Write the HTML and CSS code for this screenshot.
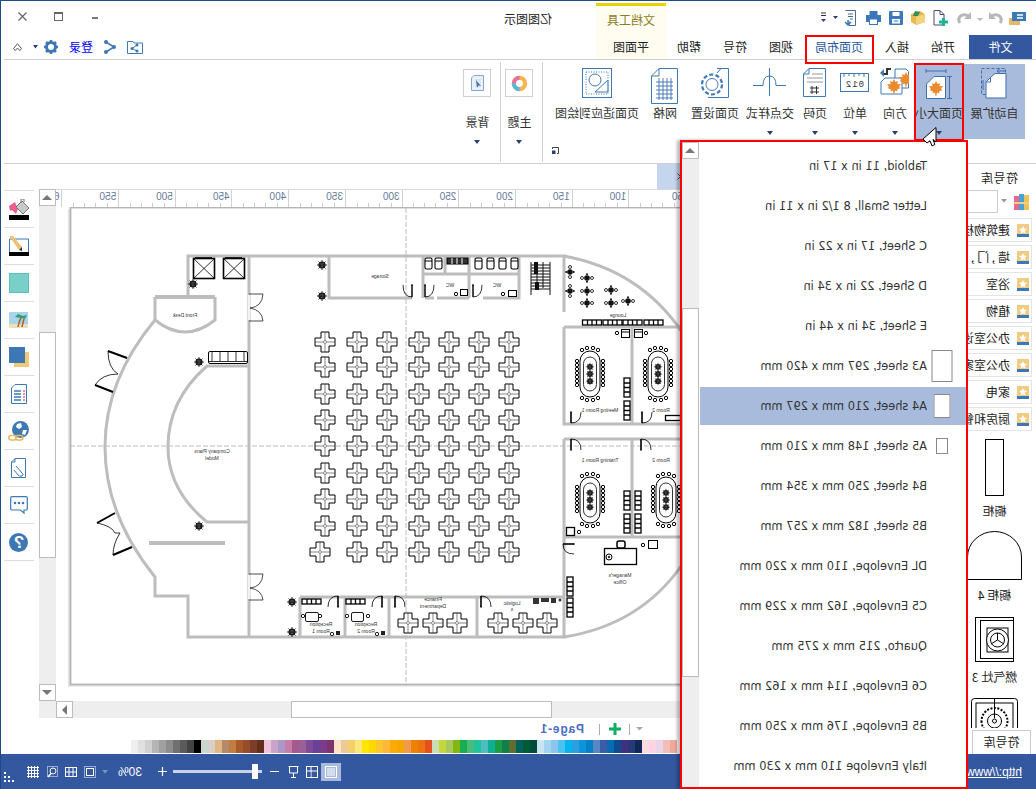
FILE: index.html
```html
<!DOCTYPE html>
<html lang="zh">
<head>
<meta charset="utf-8">
<title>亿图图示</title>
<link rel="stylesheet" href="styles.css">
</head>
<body>
<svg class="defs" width="0" height="0">
  <defs>
    <g id="cat"><rect width="12" height="12" fill="#f2cb82"/><rect y="10" width="12" height="3" fill="#3c78b8"/><path d="M6 2l1.2 2.6 2.8.3-2.100 1.900.6 2.800L6 8.200 3.500 9.600l.6-2.800L2 4.900l2.800-.3z" fill="#fff"/></g>
    <g id="c"><path d="M-4-10H4V-4H10V4H4V10H-4V4H-10V-4H-4Z" fill="#fff" stroke="#000" stroke-width="1"/><path d="M-10 0H-2M2 0H10M0-10V-2M0 2V10" stroke="#333" stroke-width=".6"/><circle r="1.500" fill="#fff" stroke="#555" stroke-width=".7"/></g>
    <g id="r"><use href="#c" x="325"/><use href="#c" x="357"/><use href="#c" x="387"/><use href="#c" x="419"/><use href="#c" x="449"/><use href="#c" x="479"/><use href="#c" x="509"/></g>
    <g id="p"><circle r="3.600" fill="#1a1a1a"/><path d="M-5 0H5M0-5V5M-3.500-3.500L3.500 3.500M-3.500 3.500L3.500-3.500" stroke="#222" stroke-width=".9"/><path d="M-1.500-1L1.500-1M-1 1.500L1 1" stroke="#888" stroke-width=".6"/></g>
    <g id="t"><rect x="-10" y="-23" width="20" height="46" rx="10" fill="#fff" stroke="#000"/><rect x="-6.500" y="-17" width="13" height="34" rx="6.500" fill="#fff" stroke="#000" stroke-width=".8"/><use href="#p" y="-9" transform="scale(.8)"/><use href="#p" y="0" transform="scale(.8)"/><use href="#p" y="9" transform="scale(.8)"/><g fill="#fff" stroke="#000" stroke-width="1"><circle cx="-13" cy="-13" r="1.700"/><circle cx="-13" cy="-9" r="1.700"/><circle cx="-13" cy="-5" r="1.700"/><circle cx="-13" cy="-1" r="1.700"/><circle cx="-13" cy="3" r="1.700"/><circle cx="-13" cy="7" r="1.700"/><circle cx="-13" cy="11" r="1.700"/><circle cx="13" cy="-13" r="1.700"/><circle cx="13" cy="-9" r="1.700"/><circle cx="13" cy="-5" r="1.700"/><circle cx="13" cy="-1" r="1.700"/><circle cx="13" cy="3" r="1.700"/><circle cx="13" cy="7" r="1.700"/><circle cx="13" cy="11" r="1.700"/><circle cx="-8" cy="-24" r="1.700"/><circle cx="-3" cy="-26" r="1.700"/><circle cx="3" cy="-26" r="1.700"/><circle cx="8" cy="-24" r="1.700"/><circle cx="-8" cy="24" r="1.700"/><circle cx="-3" cy="26" r="1.700"/><circle cx="3" cy="26" r="1.700"/><circle cx="8" cy="24" r="1.700"/></g></g>
    <g id="s"><rect width="19" height="5" fill="#fff" stroke="#000" stroke-width="1.300"/><path d="M5 0V5M9.500 0V5M14 0V5" stroke="#000" stroke-width="1.300"/></g>
    <g id="sv"><rect width="6" height="19" fill="#fff" stroke="#000" stroke-width="1.300"/><path d="M0 5H6M0 9.500H6M0 14H6" stroke="#000" stroke-width="1.300"/></g>
    <g id="d"><path d="M0 0V11" stroke="#000" stroke-width="1.600" fill="none"/><path d="M0 0Q10 0 10 11" stroke="#000" stroke-width=".8" fill="none"/><circle cx="0" cy="11" r=".8" fill="#000"/></g>
    <g id="l"><circle r="2.800" fill="#111"/><circle cx="-5" r="1.500" fill="#fff" stroke="#000" stroke-width=".8"/><circle cx="5" r="1.500" fill="#fff" stroke="#000" stroke-width=".8"/><circle cy="-3.800" r="1" fill="#111"/><circle cy="3.800" r="1" fill="#111"/></g>
    <g id="w"><rect width="7" height="11" rx="1.500" fill="#fff" stroke="#000" stroke-width="1.100"/><path d="M0 3H7" stroke="#000"/></g>
    <g id="leaf"><path d="M7 0l1.500 3 2.500-1-.7 3.200L14 5l-2 3 1.500 1-3.500 1.500.5 2L8 11.500 7.300 15h-.8L6 11.500 3.500 12.500l.5-2L.5 9 2 8 0 5l3.700.2L3 2l2.500 1z" fill="#ec8a2e"/></g>
  </defs>
</svg>

<div class="app">
  <header class="titlebar">
    <div class="qat">
      <svg class="im" width="17" height="13" viewBox="0 0 17 13"><rect x="0" y="6" width="11" height="7" fill="#e3b96e"/><rect x="3" y="0" width="14" height="9" fill="#3c78b8"/><path d="M8 3h6M8 6h6" stroke="#fff" stroke-width="1.500"/></svg>
      <svg class="im" width="14" height="13" viewBox="0 0 14 13"><path d="M2 4.500Q7 1 11 4.500Q13.500 7.500 11 11" fill="none" stroke="#b8b8b8" stroke-width="3"/><path d="M0 0V7H7Z" fill="#b8b8b8"/></svg>
      <svg width="6" height="13" viewBox="0 0 6 13"><path d="M0 6H6L3 9Z" fill="#b8b8b8"/></svg>
      <svg class="im" width="14" height="13" viewBox="0 0 14 13"><path d="M12 4.500Q7 1 3 4.500Q.5 7.500 3 11" fill="none" stroke="#b8b8b8" stroke-width="3"/><path d="M14 0V7H7Z" fill="#b8b8b8"/></svg>
      <svg class="im m3" width="15" height="17" viewBox="0 0 15 17"><path d="M1 .5H7L11 4.500V15H1Z" fill="#fff" stroke="#4a4a6a"/><path d="M7 .5V4.500H11" fill="none" stroke="#4a4a6a"/><path d="M6 12H15M10.500 8V16" stroke="#1eb394" stroke-width="3"/></svg>
      <svg class="im m2" width="14" height="14" viewBox="0 0 14 14"><path d="M0 3L9 0L14 3V11L5 14L0 11Z" fill="#e9b94f"/><path d="M4 0L9 1L7 5L2 5Z" fill="#2f8f56"/><path d="M5 6L14 3V11L5 14Z" fill="#f3d27c"/></svg>
      <svg class="m2" width="14" height="14" viewBox="0 0 14 14"><rect width="14" height="14" rx="1" fill="#3c78b8"/><rect x="3.500" y="1" width="7" height="4" fill="#fff"/><rect x="3" y="8" width="8" height="4.500" fill="#fff"/><rect x="4.500" y="9.500" width="5" height="1" fill="#3c78b8"/></svg>
      <svg class="m2" width="15" height="14" viewBox="0 0 15 14"><rect x="3.500" y="0" width="8" height="4" fill="#3c78b8"/><rect x="0" y="4" width="15" height="7" fill="#3c78b8"/><rect x="3.500" y="8" width="8" height="5.500" fill="#fff" stroke="#3c78b8"/></svg>
      <svg class="im m4" width="11" height="16" viewBox="0 0 11 16"><path d="M.5.5H10.500V15.500H4V11" fill="#fff" stroke="#4a6a94"/><path d="M3 4H8M3 6.500H8M5 9H8" stroke="#4a6a94"/><path d="M3 10V14M0 12L3 15L6 12" fill="none" stroke="#3c78b8" stroke-width="1.500"/></svg>
      <svg class="m1" width="5" height="14" viewBox="0 0 5 14"><path d="M0 5H5L2.500 8Z" fill="#2b3f72"/></svg>
      <svg class="m1" width="5" height="14" viewBox="0 0 5 14"><path d="M0 2H5M0 4.500H5" stroke="#333"/><path d="M0 8H5L2.500 11Z" fill="#2b3f72"/></svg>
    </div>
    <div class="ctx-head">文档工具</div>
    <div class="doc-title">亿图图示</div>
    <div class="winctl">
      <span class="win-min"></span>
      <span class="win-max"></span>
      <svg width="9" height="9" viewBox="0 0 9 9"><path d="M.5.5L8.500 8.500M8.500.5L.5 8.500" stroke="#666" stroke-width="1.200"/></svg>
    </div>
  </header>

  <nav class="tabs">
    <div class="tab tab-file">文件</div>
    <div class="tab w46">开始</div>
    <div class="tab w46">插入</div>
    <div class="tab tab-active">页面布局<span class="mark"></span></div>
    <div class="tab w46">视图</div>
    <div class="tab w46">符号</div>
    <div class="tab w46">帮助</div>
    <div class="tab tab-ctx">平面图</div>
    <div class="tab-tools">
      <svg class="im" width="16" height="14" viewBox="0 0 16 14"><path d="M.5 1.500H6L7 3H15.500V13.500H.5Z" fill="#fff" stroke="#3e78b4"/><path d="M5 8.500L10 5M5 8.500L10 11" stroke="#3e78b4"/><circle cx="5" cy="8.500" r="1.500" fill="#3e78b4"/><circle cx="10" cy="5" r="1.500" fill="#3e78b4"/><circle cx="10" cy="11" r="1.500" fill="#3e78b4"/></svg>
      <svg class="im" width="12" height="14" viewBox="0 0 12 14"><path d="M2 2L10 7L2 12" fill="none" stroke="#3e78b4" stroke-width="1.500"/><circle cx="2" cy="2" r="2" fill="#3e78b4"/><circle cx="10" cy="7" r="2" fill="#3e78b4"/><circle cx="2" cy="12" r="2" fill="#3e78b4"/></svg>
      <span class="login">登录</span>
      <svg width="14" height="14" viewBox="0 0 14 14"><circle cx="7" cy="7" r="4.500" fill="none" stroke="#3e78b4" stroke-width="3"/><path d="M7 0V2.500M7 11.500V14M0 7H2.500M11.500 7H14M2 2L4 4M10 10L12 12M12 2L10 4M4 10L2 12" stroke="#3e78b4" stroke-width="2.500"/></svg>
      <svg class="mn5" width="5" height="4" viewBox="0 0 5 4"><path d="M0 0H5L2.500 3.500Z" fill="#2b3f72"/></svg>
      <svg width="9" height="8" viewBox="0 0 9 8"><path d="M.5 5.500L4.500.8L8.500 5.500L6.800 7.500L4.500 5L2.200 7.500Z" fill="none" stroke="#555"/></svg>
    </div>
  </nav>

  <section class="ribbon">
    <div class="rgroup rg-main">
      <div class="rrow">
        <div class="rbtn w61 on">
          <div class="ric"><svg class="im" width="26" height="31" viewBox="0 0 26 31"><rect x=".5" y=".5" width="24" height="26" fill="none" stroke="#3e6fae" stroke-dasharray="3 2"/><path d="M9.500 9.500L14 5.500H25V30H5V14Z" fill="#fff" stroke="#3e6fae"/><path d="M9.500 9.500V14H5" fill="none" stroke="#3e6fae"/><path d="M16 3H24M19 .5L16 3L19 5.500" fill="none" stroke="#3e6fae"/><path d="M2 12V22" stroke="#3e6fae"/></svg></div>
          <span class="rlabel">自动扩展</span>
        </div>
        <div class="rbtn w48 on">
          <span class="mark mark-size"></span>
          <div class="ric"><svg class="im" width="28" height="31" viewBox="0 0 28 31"><path d="M1 1V5M21 1V5M1 3H21" fill="none" stroke="#3e6fae"/><path d="M9 8.500H20.500V30.500H1.500V16Z" fill="#fff" stroke="#3e6fae"/><use href="#leaf" x="4" y="13"/><path d="M22 8.500H27M22 30.500H27M24.500 8.500V30.500" fill="none" stroke="#3e6fae"/></svg></div>
          <span class="rlabel">页面大小</span>
          <i class="caret"></i>
        </div>
        <div class="rbtn w40">
          <div class="ric"><svg class="im" width="29" height="27" viewBox="0 0 29 27"><path d="M15 1H26L28.500 3.500V20H15Z" fill="#fff" stroke="#3e78b4"/><path d="M5 10H22V26H1V14Z" fill="#fff" stroke="#3e78b4"/><use href="#leaf" x="7" y="11"/><use href="#leaf" x="19" y="4" /><path d="M2 6H7V1L11 1" fill="none" stroke="#333" stroke-width="2"/><path d="M0 5L4 1V9Z" fill="#3e78b4"/></svg></div>
          <span class="rlabel">方向</span>
          <i class="caret"></i>
        </div>
        <div class="rbtn w40">
          <div class="ric"><svg class="ric-low" width="29" height="20" viewBox="0 0 29 20"><rect x=".5" y=".5" width="28" height="18" fill="#fff" stroke="#3e78b4"/><path d="M5 .5V4M10 .5V3M15 .5V4M20 .5V3M25 .5V4" stroke="#3e78b4"/><text class="ric-num" x="14.500" y="14">012</text></svg></div>
          <span class="rlabel">单位</span>
          <i class="caret"></i>
        </div>
        <div class="rbtn w40">
          <div class="ric"><svg class="im" width="23" height="29" viewBox="0 0 23 29"><path d="M6 .5H22.500V28.500H.5V6Z" fill="#fff" stroke="#3e78b4"/><path d="M6 .5V6H.5" fill="none" stroke="#3e78b4"/><path d="M9 6H20M4 10H20M4 14H20" stroke="#bbb" stroke-width="1.500"/><path d="M9 18V26M13.500 18V26M7 20H16M7 24H16" stroke="#333"/></svg></div>
          <span class="rlabel">页码</span>
          <i class="caret"></i>
        </div>
        <div class="rbtn w50">
          <div class="ric"><svg width="33" height="28" viewBox="0 0 33 28"><path d="M0 17.500H10Q10 8 16.500 8Q23 8 23 17.500H33M16.500 0V28" fill="none" stroke="#3e78b4"/></svg></div>
          <span class="rlabel">交点样式</span>
          <i class="caret"></i>
        </div>
        <div class="rbtn w60">
          <div class="ric"><svg class="im" width="29" height="30" viewBox="0 0 29 30"><path d="M17 .5H28.500V29.500H8" fill="#fff" stroke="#3e78b4"/><path d="M21 .5L17 5" stroke="#3e78b4"/><circle cx="12" cy="16.500" r="6" fill="#fff" stroke="#3e78b4"/><circle cx="12" cy="16.500" r="10" fill="none" stroke="#3e78b4" stroke-width="2.200" stroke-dasharray="4 2.300"/></svg></div>
          <span class="rlabel">页面设置</span>
        </div>
        <div class="rbtn w40">
          <div class="ric"><svg class="im" width="27" height="36" viewBox="0 0 27 36"><path d="M8 .5H26.500V35.500H.5V8Z" fill="#fff" stroke="#3e78b4"/><path d="M8 .5V8H.5" fill="none" stroke="#3e78b4"/><path d="M5 14H22M5 18H22M5 22H22M5 26H22M5 30H22M8 10V32M12 10V32M16 10V32M20 10V32" stroke="#3e6fae" stroke-width=".9"/></svg></div>
          <span class="rlabel">网格</span>
        </div>
        <div class="rbtn w96">
          <div class="ric"><svg class="im" width="30" height="30" viewBox="0 0 30 30"><rect x=".5" y=".5" width="29" height="29" fill="#fff" stroke="#3e78b4"/><rect x="4" y="4" width="22" height="22" fill="none" stroke="#3e78b4" stroke-dasharray="1 1.500"/><circle cx="13" cy="12" r="6" fill="none" stroke="#3e78b4"/><path d="M13 24L26 24V12Z" fill="none" stroke="#3e78b4"/></svg></div>
          <span class="rlabel">页面适应到绘图</span>
        </div>
      </div>
      <div class="rfoot"><svg width="7" height="7" viewBox="0 0 7 7"><path d="M.5 2V.5H6.500V6.500H5" fill="none" stroke="#444"/><path d="M0 7V3.500H3.500V7Z M1 6L4 2" fill="#2b3f72"/></svg></div>
    </div>
    <div class="rgroup rg-side">
      <div class="ric-box"><svg width="17" height="17" viewBox="0 0 22 22"><circle cx="11" cy="11" r="10" fill="#f6b44d"/><path d="M11 1A10 10 0 0 1 21 11H11Z" fill="#e86e9c"/><path d="M11 11H21A10 10 0 0 1 11 21Z" fill="#55b7dc"/><circle cx="11" cy="11" r="4.500" fill="#fff"/></svg></div>
      <span class="rlabel rlabel-side">主题</span>
      <i class="caret"></i>
    </div>
    <div class="rgroup rg-side">
      <div class="ric-box"><svg class="im" width="13" height="16" viewBox="0 0 13 16"><path d="M3 .5H12.500V15.500H.5V3Z" fill="#e9f0f8" stroke="#84a6cf"/><path d="M4 5H10M4 8H10M4 11H10" stroke="#c9d8ea"/><path d="M5 5L10 11L7.500 10.500L6 13Z" fill="#4a74ab"/></svg></div>
      <span class="rlabel rlabel-side">背景</span>
      <i class="caret"></i>
    </div>
  </section>

  <main class="body">
    <aside class="library">
      <div class="lib-title">符号库</div>
      <div class="lib-search">
        <svg class="im" width="15" height="16" viewBox="0 0 15 16"><rect x="0" y="2" width="5" height="14" fill="#e8688f"/><rect x="5" y="0" width="5" height="16" fill="#4aa3d8"/><rect x="10" y="1" width="5" height="15" fill="#f0c35a"/><rect x="0" y="8" width="15" height="2" fill="#f2d07c"/></svg>
        <svg width="6" height="4" viewBox="0 0 6 4"><path d="M0 0H6L3 3.500Z" fill="#999"/></svg>
        <span class="lib-input"></span>
      </div>
      <ul class="cats">
        <li><svg width="12" height="13" viewBox="0 0 12 13"><use href="#cat"/></svg>建筑物核心</li>
        <li><svg width="12" height="13" viewBox="0 0 12 13"><use href="#cat"/></svg>墙 , 门 , 窗</li>
        <li><svg width="12" height="13" viewBox="0 0 12 13"><use href="#cat"/></svg>浴室</li>
        <li><svg width="12" height="13" viewBox="0 0 12 13"><use href="#cat"/></svg>植物</li>
        <li><svg width="12" height="13" viewBox="0 0 12 13"><use href="#cat"/></svg>办公室设备</li>
        <li><svg width="12" height="13" viewBox="0 0 12 13"><use href="#cat"/></svg>办公室家具</li>
        <li><svg width="12" height="13" viewBox="0 0 12 13"><use href="#cat"/></svg>家电</li>
        <li><svg width="12" height="13" viewBox="0 0 12 13"><use href="#cat"/></svg>厨房和餐厅</li>
      </ul>
      <div class="shapes">
        <svg class="sh1" width="19" height="57" viewBox="0 0 19 57"><rect x=".5" y=".5" width="18" height="56" fill="#fff" stroke="#000"/></svg>
        <span class="sh-label">橱柜</span>
        <svg class="sh2" width="55" height="49" viewBox="0 0 55 49"><path d="M.5 48.500V26A27 25.500 0 0 1 54.500 26V48.500Z" fill="#fff" stroke="#000"/></svg>
        <span class="sh-label">橱柜 4</span>
        <svg class="sh3" width="39" height="45" viewBox="0 0 39 45"><rect x=".5" y=".5" width="38" height="44" fill="#fff" stroke="#000"/><rect x=".5" y="3.500" width="33" height="38" fill="#fff" stroke="#000"/><rect x="6" y="11" width="21" height="24" fill="#fff" stroke="#000"/><circle cx="16.500" cy="23" r="11" fill="#fff" stroke="#000"/><circle cx="16.500" cy="23" r="7" fill="#fff" stroke="#000"/><path d="M16.500 23V16M16.500 23L10 27M16.500 23L23 27" stroke="#000"/></svg>
        <span class="sh-label">燃气灶 3</span>
        <svg class="sh4" width="47" height="30" viewBox="0 0 47 30"><rect x=".5" y=".5" width="46" height="40" rx="3" fill="#fff" stroke="#000"/><rect x="5" y="5" width="37" height="30" fill="#fff" stroke="#000"/><path d="M23.500 0V20" stroke="#000"/><circle cx="23.500" cy="23" r="13" fill="none" stroke="#000" stroke-dasharray="2 1.500" stroke-width="2"/><circle cx="23.500" cy="23" r="7" fill="none" stroke="#000"/><circle cx="23.500" cy="23" r="2" fill="none" stroke="#000"/></svg>
      </div>
      <div class="lib-tab">符号库</div>
    </aside>

    <section class="workarea">
      <div class="pane-head"><span class="pane-collapse"><svg width="4" height="7" viewBox="0 0 4 7"><path d="M3.500.5L.5 3.500L3.500 6.500" fill="none" stroke="#444"/></svg></span></div>
      <div class="editor">
        <div class="canvas-col">
          <div class="ruler">
            <span>50</span><span>100</span><span>150</span><span>200</span><span>250</span><span>300</span><span>350</span><span>400</span><span>450</span><span>500</span><span>550</span><span>600</span>
          </div>
          <svg class="plan" width="911" height="494" viewBox="69 207 911 494">
            <g transform="matrix(-1 0 0 1 1036 0)">
              <rect x="68" y="209" width="3" height="478" fill="#e4e4e4"/>
              <rect x="70" y="685" width="800" height="2" fill="#ececec"/>
              <rect x="70.500" y="207.500" width="800" height="477" fill="#fff" stroke="#b5b5b5" stroke-width="1.800"/>
              <path d="M406 208V685M70 446H680" stroke="#aaa" stroke-width=".8" stroke-dasharray="5 2" fill="none"/>
              <g fill="none" stroke="#bdbdbd" stroke-width="3">
                <path d="M188 297V256H564V312"/>
                <path d="M249 256V637"/>
                <path d="M155 297H215" stroke-width="4"/>
                <path d="M155 297V320Q185 344 215 320V297" stroke-width="3"/>
                <path d="M155 320Q105 380 105 447Q105 515 155 577V596H188V637H564V439"/>
                <path d="M249 366H207Q168 400 168 447Q168 490 207 522H249"/>
                <path d="M149 543H225" stroke-width="4"/>
                <path d="M329 256V298H412M425 298H434M437 298H469M483 298H519V256M423 256V298M469 256V298"/>
                <path d="M423 274H445V256M469 274H519M445 274H469"/>
                <path d="M564 256Q640 270 682 332"/>
                <path d="M564 327H682M564 327V424H682M632 327V424"/>
                <path d="M564 439H682M632 439V537M564 537H682"/>
                <path d="M564 637Q640 625 682 565"/>
                <path d="M300 597H564M300 597V637M345 597V637M389 597V637M477 597V637"/>
              </g>
              <g>
                <rect x="193.500" y="258.500" width="21" height="20" fill="#fff" stroke="#000" stroke-width="1.600"/><path d="M193.500 258.500L214.500 278.500M214.500 258.500L193.500 278.500M195 257.500H212" stroke="#000" stroke-width=".8"/>
                <rect x="223.500" y="258.500" width="21" height="20" fill="#fff" stroke="#000" stroke-width="1.600"/><path d="M223.500 258.500L244.500 278.500M244.500 258.500L223.500 278.500M225 257.500H242" stroke="#000" stroke-width=".8"/>
                <use href="#p" x="193" y="284"/><use href="#p" x="322" y="265"/><use href="#p" x="322" y="296"/><use href="#p" x="199" y="362"/><use href="#p" x="199" y="526"/><use href="#p" x="292" y="602"/><use href="#p" x="292" y="632"/>
                <rect x="208.500" y="351.500" width="39" height="12" rx="1.500" fill="#fff" stroke="#000"/><path d="M212 352V361M220 352V361M228 352V361M236 352V361M244 352V361M209 361.500H247" stroke="#000" stroke-width=".8"/>
              </g>
              <g fill="none" stroke="#000" stroke-width=".8">
                <path d="M249 294H263Q262 307 250 308Q262 310 263 321H249" stroke="#222"/>
                <path d="M249 574H263Q262 587 250 588Q262 590 263 600H249" stroke="#222"/>
                <path d="M108 351Q108 368 118 374Q102 374 95 385M97 523Q112 526 115 533L120 533Q113 544 113 555"/>
                <path d="M108 351L127 358M95 385L113 392M97 523L115 513M113 555L132 547" stroke-width="2"/>
              </g>
              <path d="M249 295V320M249 575V599" stroke="#fff" stroke-width="1.600"/>
              <use href="#d" transform="translate(412 297) scale(-.9 -1.100)"/>
              <use href="#d" transform="translate(425 297) scale(.9 -1.100)"/>
              <use href="#d" transform="translate(473 297) scale(.9 -1.100)"/>
              <use href="#d" transform="translate(571 423) scale(1 -1)"/>
              <use href="#d" transform="translate(642 423) scale(1 -1)"/>
              <use href="#d" transform="translate(571 439)"/>
              <use href="#d" transform="translate(641 439)"/>
              <use href="#d" transform="translate(382 596) scale(-1 1)"/>
              <use href="#d" transform="translate(395 596)"/>
              <use href="#d" transform="translate(481 596)"/>
              <use href="#d" transform="translate(338 596) scale(-1 1)"/>
              <use href="#d" transform="translate(563 544) rotate(-90) scale(-1 1)"/>
              <use href="#w" x="425" y="258"/><use href="#w" x="435" y="258"/><use href="#w" x="475" y="258"/><use href="#w" x="487" y="258"/><use href="#w" x="499" y="258"/><use href="#w" x="511" y="258"/>
              <rect x="447" y="258" width="21" height="6" fill="#333" stroke="#000"/><path d="M452 258V264M457 258V264M462 258V264" stroke="#fff"/>
              <g fill="#fff" stroke="#000"><rect x="460.500" y="289.500" width="7" height="6"/><circle cx="456" cy="294" r="1.700"/><rect x="508.500" y="290.500" width="8" height="6"/><circle cx="503" cy="294" r="1.700"/></g>
              <rect x="530" y="262" width="21" height="33" fill="#fff"/><path d="M531 262V295M550 262V295M537 262V288M543 262V288M531 265H550M531 268H550M531 271H550M531 274H550M531 277H550M531 280H550M531 283H550M531 286H550M531 289H550" stroke="#111" stroke-width="1"/>
              <rect x="534" y="262" width="4" height="12" fill="#111"/><rect x="535" y="282" width="4" height="8" fill="#111"/>
              <use href="#s" x="582.500" y="320"/><use href="#s" x="603" y="320"/><use href="#s" x="623" y="320"/><use href="#s" x="644" y="320"/>
              <use href="#l" x="570" y="272" transform="rotate(90 570 272)"/><use href="#l" x="570" y="291" transform="rotate(90 570 291)"/><use href="#l" x="587" y="278"/><use href="#l" x="587" y="291"/><use href="#l" x="587" y="303"/><use href="#l" x="611" y="290"/><use href="#l" x="611" y="303"/><use href="#l" x="628" y="301"/>
              <g fill="#fff" stroke="#000"><rect x="621.500" y="329.500" width="8" height="8"/><rect x="634.500" y="329.500" width="8" height="8"/><circle cx="617" cy="333" r="1.700"/><circle cx="646" cy="333" r="1.700"/></g>
              <path d="M622 332H629M635 332H642" stroke="#000"/>
              <use href="#t" x="590" y="374"/><use href="#t" x="658" y="374"/><use href="#t" x="590" y="500"/><use href="#t" x="666" y="500"/>
              <use href="#sv" x="624" y="378"/><use href="#sv" x="624" y="401"/><use href="#sv" x="624" y="491"/><use href="#sv" x="624" y="514"/><use href="#sv" x="635" y="491"/><use href="#sv" x="635" y="514"/><use href="#sv" x="567" y="577"/><use href="#sv" x="567" y="598"/>
              <rect x="665.500" y="415.500" width="15" height="5" fill="#fff" stroke="#000" stroke-width="1.300"/>
              <rect x="566.500" y="527.500" width="8" height="8" fill="#fff" stroke="#000" stroke-width="1.300"/><circle cx="579" cy="532" r="1.700" fill="#fff" stroke="#000"/>
              <rect x="604.500" y="548.500" width="32" height="16" fill="#fff" stroke="#000" stroke-width="1.300"/><circle cx="609" cy="557" r="3" fill="#fff" stroke="#000"/><circle cx="609" cy="557" r="1.200" fill="#333"/><rect x="617" y="541" width="8" height="7" rx="2" fill="#fff" stroke="#000" stroke-width="1.500"/>
              <rect x="648.500" y="540.500" width="9" height="8" fill="#fff" stroke="#000"/><circle cx="643" cy="545" r="1.700" fill="#fff" stroke="#000"/>
              <use href="#s" x="302" y="599"/><use href="#s" x="346" y="599"/>
              <g fill="#fff" stroke="#000" stroke-width=".9"><rect x="305.500" y="612.500" width="13" height="9" rx="1.500"/><circle cx="303" cy="616" r="1.700"/><circle cx="320" cy="616" r="1.700"/><rect x="351.500" y="612.500" width="12" height="9" rx="1.500"/><circle cx="347" cy="616" r="1.700"/><circle cx="368" cy="616" r="1.700"/><circle cx="377" cy="634" r="1.700"/><circle cx="332" cy="634" r="1.700"/></g>
              <rect x="381" y="631" width="4" height="4" fill="#222"/><rect x="336" y="631" width="4" height="4" fill="#222"/>
              <g fill="#333"><rect x="533" y="598" width="6" height="6"/><rect x="541" y="598" width="8" height="4"/><rect x="551" y="598" width="5" height="5"/><circle cx="560" cy="600" r="1.500"/></g>
              <use href="#r" y="342"/><use href="#r" y="367"/><use href="#r" y="394"/><use href="#r" y="420"/><use href="#r" y="446"/><use href="#r" y="473"/><use href="#r" y="499"/><use href="#r" y="526"/>
              <use href="#c" x="320" y="552"/><use href="#c" x="357" y="552"/><use href="#c" x="387" y="552"/><use href="#c" x="419" y="552"/><use href="#c" x="449" y="552"/><use href="#c" x="479" y="552"/><use href="#c" x="509" y="552"/>
              <use href="#c" x="408" y="623"/><use href="#c" x="433" y="623"/><use href="#c" x="457" y="623"/><use href="#c" x="498" y="623"/><use href="#c" x="523" y="623"/><use href="#c" x="547" y="623"/>
            </g>
            <g class="plan-text">
              <text x="851" y="317">Front Desk</text>
              <text x="824" y="453">Company Plans</text>
              <text x="824" y="460">Model</text>
              <text x="656" y="278">Storage</text>
              <text x="586" y="287">WC</text>
              <text x="539" y="287">WC</text>
              <text x="418" y="317">Lounge</text>
              <text x="436" y="412">Meeting Room 1</text>
              <text x="375" y="412">Room 2</text>
              <text x="436" y="462">Training Room 1</text>
              <text x="375" y="462">Room 2</text>
              <text x="416" y="577">Manager's</text>
              <text x="416" y="584">Office</text>
              <text x="524" y="605">Logistic</text>
              <text x="524" y="611">s</text>
              <text x="603" y="601">Finance</text>
              <text x="603" y="608">Department</text>
              <text x="715" y="626">Reception</text>
              <text x="715" y="633">Room 1</text>
              <text x="670" y="626">Reception</text>
              <text x="670" y="633">Room 2</text>
            </g>
          </svg>
        </div>
        <div class="vscroll">
          <span class="sb-btn"><i class="tri tri-up"></i></span>
          <span class="sb-track vt1"></span>
          <span class="sb-thumb vt2"></span>
          <span class="sb-track vt3"></span>
          <span class="sb-btn"><i class="tri tri-down"></i></span>
        </div>
      </div>
      <div class="hscroll">
        <span class="sb-track ht1"></span>
        <span class="sb-thumb ht2"></span>
        <span class="sb-track ht3"></span>
        <span class="sb-btn"><i class="tri tri-right"></i></span>
        <span class="sb-track ht4"></span>
      </div>
      <div class="pagebar">
        <svg width="7" height="4" viewBox="0 0 7 4"><path d="M0 0H7L3.500 3.500Z" fill="#aaa"/></svg>
        <span class="pg-sep"></span>
        <svg width="12" height="12" viewBox="0 0 12 12"><path d="M6 0V12M0 6H12" stroke="#0fae60" stroke-width="3"/></svg>
        <span class="pg-sep"></span>
        <span class="pg-name">Page-1</span>
      </div>
      <div class="palette">
        <i class="sw c1"></i><i class="sw c2"></i><i class="sw c3"></i><i class="sw c4"></i><i class="sw c5"></i><i class="sw c6"></i><i class="sw c7"></i><i class="sw c8"></i><i class="sw c9"></i><i class="sw c10"></i><i class="sw c11"></i><i class="sw c12"></i><i class="sw c13"></i><i class="sw c14"></i><i class="sw c15"></i><i class="sw c16"></i><i class="sw c17"></i><i class="sw c18"></i><i class="sw c19"></i><i class="sw c20"></i><i class="sw c21"></i><i class="sw c22"></i><i class="sw c23"></i><i class="sw c24"></i><i class="sw c25"></i><i class="sw c26"></i><i class="sw c27"></i><i class="sw c28"></i><i class="sw c29"></i><i class="sw c30"></i><i class="sw c31"></i><i class="sw c32"></i><i class="sw c33"></i><i class="sw c34"></i><i class="sw c35"></i><i class="sw c36"></i><i class="sw c37"></i><i class="sw c38"></i><i class="sw c39"></i><i class="sw c40"></i><i class="sw c41"></i><i class="sw c42"></i><i class="sw c43"></i><i class="sw c44"></i><i class="sw c45"></i><i class="sw c46"></i><i class="sw c47"></i><i class="sw c48"></i><i class="sw c49"></i><i class="sw c50"></i><i class="sw c51"></i><i class="sw c52"></i><i class="sw c53"></i><i class="sw c54"></i><i class="sw c55"></i><i class="sw c56"></i><i class="sw c57"></i><i class="sw c58"></i><i class="sw c59"></i><i class="sw c60"></i><i class="sw c61"></i><i class="sw c62"></i><i class="sw c63"></i><i class="sw c64"></i><i class="sw c65"></i><i class="sw c66"></i><i class="sw c67"></i><i class="sw c68"></i><i class="sw c69"></i><i class="sw c70"></i><i class="sw c71"></i><i class="sw c72"></i><i class="sw c73"></i><i class="sw c74"></i><i class="sw c75"></i><i class="sw c76"></i><i class="sw c77"></i><i class="sw c78"></i>
      </div>
    </section>

    <aside class="tools">
      <div class="tool"><svg class="im" width="20" height="21" viewBox="0 0 20 21"><path d="M0 7L6 3L9 10L7 15L3 11L1 12Z" fill="#e8608c"/><path d="M7 8L13 2L20 9L14 15Z" fill="#c9c9c9" stroke="#777"/><path d="M12 4V0H15V3" fill="none" stroke="#777"/><rect y="16" width="20" height="5" fill="#000"/></svg></div>
      <div class="tool"><svg class="im" width="20" height="20" viewBox="0 0 20 20"><path d="M.5 15V2H19.500V15" fill="none" stroke="#3e78b4" transform="translate(0 1)"/><path d="M0 0H4L13 11L10 14Z" fill="#edc274"/><path d="M10 14L13 11L13 15Z" fill="#333"/><rect y="16" width="20" height="4" fill="#000"/></svg></div>
      <div class="tool"><span class="tool-fill"></span></div>
      <div class="tool"><svg class="im" width="19" height="16" viewBox="0 0 19 16"><rect width="19" height="16" fill="#a9d5ec"/><rect y="12" width="19" height="4" fill="#f1dfb6"/><path d="M9 15Q10 9 12 6M13 15Q14 10 15 7" stroke="#a4632c" stroke-width="1.500" fill="none"/><path d="M12 6L6 5L9 2L14 4L18 3L16 7Z" fill="#3a9a76"/></svg></div>
      <div class="tool"><span class="tool-stack"></span></div>
      <div class="tool"><svg class="im" width="16" height="20" viewBox="0 0 16 20"><path d="M4 .5H15.500V19.500H.5V4Z" fill="#fff" stroke="#3e78b4"/><path d="M3 7H10M3 10H10M3 13H10M3 16H10" stroke="#3e78b4" stroke-width="1.500"/><path d="M12 7H14M12 10H14M12 13H14M12 16H14" stroke="#e8688f" stroke-width="1.500"/></svg></div>
      <div class="tool"><svg class="im" width="21" height="21" viewBox="0 0 21 21"><circle cx="12.500" cy="8.500" r="8.500" fill="#3e78b4"/><path d="M9 3L13 2L14 6L11 8L8 6ZM15 9L19 9L17 14L14 13Z" fill="#fff"/><g fill="none" stroke="#e8b85c" stroke-width="1.500"><rect x=".8" y="14.500" width="7.500" height="4.500" rx="2.200"/><rect x="7.500" y="14.500" width="7.500" height="4.500" rx="2.200"/></g></svg></div>
      <div class="tool"><svg class="im" width="15" height="20" viewBox="0 0 15 20"><path d="M4 .5H14.500V19.500H.5V4Z" fill="#fff" stroke="#3e78b4"/><path d="M4 .5V4H.5" fill="none" stroke="#3e78b4"/><path d="M5 8L11 15Q13 17 11 18Q9 19 7 17L3 12" fill="none" stroke="#3e78b4"/></svg></div>
      <div class="tool"><svg class="im" width="18" height="18" viewBox="0 0 18 18"><path d="M2 .7H16Q17.300.7 17.300 2V13Q17.300 14 16 14H14V17L10.500 14H2Q.7 14 .7 13V2Q.7.7 2 .7Z" fill="#fff" stroke="#3e78b4" stroke-width="1.200"/><circle cx="5" cy="7" r="1.300" fill="#3e78b4"/><circle cx="9" cy="7" r="1.300" fill="#3e78b4"/><circle cx="13" cy="7" r="1.300" fill="#3e78b4"/></svg></div>
      <div class="tool tool-last"><span class="tool-help">?</span></div>
    </aside>
  </main>

  <footer class="status">
    <a class="status-link">http://www</a>
    <div class="status-right">
      <span class="st-active"><svg width="12" height="12" viewBox="0 0 12 12"><rect x=".5" y=".5" width="11" height="11" fill="none" stroke="#fff"/><path d="M2 3H10M2 5H10M2 7H10M2 9H10" stroke="#fff"/></svg></span>
      <svg class="im g3" width="12" height="12" viewBox="0 0 12 12"><rect x=".5" y=".5" width="11" height="11" fill="none" stroke="#fff"/><path d="M.5 5H11.500M5 .5V11.500" stroke="#fff"/><rect x="1.500" y="6" width="3" height="5" fill="#34589f"/></svg>
      <svg class="g7" width="11" height="12" viewBox="0 0 11 12"><path d="M.5 .5H10.500M1.500.5V7H9.500V.5M5.500 7V11.500M3 11.500H8" fill="none" stroke="#fff"/></svg>
      <span class="st-minus g9"></span>
      <span class="slider g8"><i class="slider-thumb"></i></span>
      <svg class="g6" width="9" height="9" viewBox="0 0 9 9"><path d="M4.500 0V9M0 4.500H9" stroke="#fff" stroke-width="1.200"/></svg>
      <span class="st-zoom g16">30%</span>
      <svg class="g10" width="6" height="4" viewBox="0 0 6 4"><path d="M0 0H6L3 3.500Z" fill="#7d92c4"/></svg>
      <svg class="g6" width="12" height="12" viewBox="0 0 12 12"><rect x=".5" y=".5" width="11" height="11" fill="none" stroke="#fff" stroke-dasharray="1 1"/><rect x="2.500" y="2.500" width="7" height="7" fill="none" stroke="#fff"/></svg>
      <svg class="g7" width="12" height="12" viewBox="0 0 12 12"><rect x=".5" y="1.500" width="11" height="9" fill="none" stroke="#fff"/><path d="M.5 6H11.500M4 1.500V10.500M8 1.500V10.500" stroke="#fff"/></svg>
      <svg class="im g7" width="11" height="12" viewBox="0 0 11 12"><rect x=".5" y=".5" width="10" height="10" fill="none" stroke="#fff" stroke-dasharray="1 1"/><circle cx="6" cy="5" r="3" fill="#34589f" stroke="#fff"/><path d="M4 7.500L1 11" stroke="#fff" stroke-width="1.500"/></svg>
      <svg class="g8" width="12" height="12" viewBox="0 0 12 12"><path d="M0 1.500H12M0 4.500H12M0 7.500H12M0 10.500H12M1.500 0V12M4.500 0V12M7.500 0V12M10.500 0V12" stroke="#fff"/></svg>
      <svg class="st-grip g13" width="10" height="10" viewBox="0 0 10 10"><path d="M0 0H2V2H0ZM0 4H2V6H0ZM0 8H2V10H0ZM4 4H6V6H4ZM4 8H6V10H4ZM8 8H10V10H8Z" fill="#fff" transform="matrix(-1 0 0 1 10 0)"/></svg>
    </div>
  </footer>

  <div class="sizemenu">
    <ul class="sizelist">
      <li class="size">Tabloid, 11 in x 17 in</li>
      <li class="size">Letter Small, 8 1/2 in x 11 in</li>
      <li class="size">C Sheet, 17 in x 22 in</li>
      <li class="size">D Sheet, 22 in x 34 in</li>
      <li class="size">E Sheet, 34 in x 44 in</li>
      <li class="size"><i class="thumb a3"></i>A3 sheet, 297 mm x 420 mm</li>
      <li class="size sel"><i class="thumb a4"></i>A4 sheet, 210 mm x 297 mm</li>
      <li class="size"><i class="thumb a5"></i>A5 sheet, 148 mm x 210 mm</li>
      <li class="size">B4 sheet, 250 mm x 354 mm</li>
      <li class="size">B5 sheet, 182 mm x 257 mm</li>
      <li class="size">DL Envelope, 110 mm x 220 mm</li>
      <li class="size">C5 Envelope, 162 mm x 229 mm</li>
      <li class="size">Quarto, 215 mm x 275 mm</li>
      <li class="size">C6 Envelope, 114 mm x 162 mm</li>
      <li class="size">B5 Envelope, 176 mm x 250 mm</li>
      <li class="size">Italy Envelope 110 mm x 230 mm</li>
    </ul>
    <div class="menu-scroll">
      <span class="sb-btn"><i class="tri tri-up"></i></span>
      <span class="sb-track mt1"></span>
      <span class="sb-thumb mt2"></span>
      <span class="sb-track mt3"></span>
    </div>
  </div>

  <svg class="cursor im" width="16" height="20" viewBox="0 0 16 20"><path d="M14 .5V15L11 12.500L12.800 17.500L10 19L8 13.800L5 16L1 12Z" fill="#fff" stroke="#000"/></svg>
</div>
</body>
</html>
```

FILE: styles.css
```css
* { box-sizing: border-box; }
html, body { margin: 0; padding: 0; overflow: hidden; background: #fff; }
ul { margin: 0; padding: 0; list-style: none; }
i { display: block; }
svg { display: block; flex: none; }
.defs { position: absolute; }
.im { transform: scaleX(-1); }

.app {
  position: relative;
  width: 1036px;
  height: 789px;
  overflow: hidden;
  display: flex;
  flex-direction: column;
  background: #fff;
  border-top: 1px solid #1f4a8a;
  border-right: 1px solid #1f4a8a;
  transform: scaleX(-1);
  font: 12px/16px "Noto Sans CJK SC", "Liberation Sans", sans-serif;
  color: #222;
}

/* title bar */
.titlebar { height: 34px; display: flex; align-items: flex-start; flex: none; }
.qat { width: 370px; height: 34px; padding-left: 10px; display: flex; align-items: center; gap: 6px; flex: none; }
.m1 { margin-left: 1px; }
.m2 { margin-left: 2px; }
.m3 { margin-left: 3px; }
.m4 { margin-left: 4px; }
.ctx-head {
  width: 70px; height: 32px; margin-top: 2px; flex: none;
  background: #fffdf0; border-top: 3px solid #e8d200;
  color: #8c7d25; text-align: center; line-height: 28px; font-size: 12px;
}
.doc-title { margin-left: 44px; line-height: 36px; color: #222; }
.winctl { margin-left: auto; padding: 11px 17px 0 0; display: flex; align-items: flex-start; gap: 27px; }
.win-min { width: 6px; height: 2px; margin-top: 5px; margin-right: 2px; background: #777; }
.win-max { width: 9px; height: 9px; border: 1px solid #666; border-top-width: 2px; }

/* tabs */
.tabs { height: 24px; display: flex; align-items: stretch; flex: none; padding-left: 4px; }
.tab { display: flex; align-items: center; justify-content: center; position: relative; color: #222; flex: none; }
.tab-file { width: 63px; background: #34589f; color: #fff; margin-right: 3px; }
.w46 { width: 46px; }
.tab-active { width: 70px; color: #2b579a; }
.tab-ctx { width: 70px; background: #fffdf0; }
.mark { position: absolute; border: 2px solid #f00; pointer-events: none; }
.tab-active .mark { left: 0; right: 1px; top: 0; height: 29px; z-index: 3; }
.tab-tools { margin-left: auto; padding-right: 12px; display: flex; align-items: center; gap: 11px; }
.login { color: #0000ff; }
.mn5 { margin-left: -5px; }

/* ribbon */
.ribbon {
  height: 105px; flex: none; display: flex; align-items: stretch;
  border-top: 1px solid #d0d0d0; border-bottom: 1px solid #d0d0d0;
  margin-right: 3px; padding: 2px 0 1px; background: #fff;
}
.rgroup { display: flex; flex-direction: column; flex: none; }
.rg-main { width: 493px; padding-left: 11px; }
.rrow { display: flex; margin-top: 2px; }
.rfoot { margin-top: auto; margin-bottom: 8px; align-self: flex-end; margin-right: 9px; transform: scaleX(-1); }
.rbtn { position: relative; height: 75px; padding-top: 4px; display: flex; flex-direction: column; align-items: center; flex: none; }
.rbtn.on { background: #a9bbdc; }
.w40 { width: 40px; } .w48 { width: 48px; margin-left: 1px; } .w50 { width: 50px; } .w60 { width: 60px; } .w61 { width: 61px; } .w96 { width: 96px; }
.ric { height: 28px; flex: none; display: flex; justify-content: center; align-items: flex-start; overflow: visible; }
.ric-low { margin-top: 5px; }
.ric-num { font: 9px "Liberation Mono", monospace; fill: #333; text-anchor: middle; letter-spacing: 1px; }
.rlabel { margin-top: 9px; color: #333; white-space: nowrap; position: relative; }
.caret { width: 0; height: 0; margin-top: 10px; border: 3.500px solid transparent; border-top: 4px solid #2b3f72; border-bottom: 0; }
.mark-size { left: -1px; right: -1px; top: -1px; bottom: -2px; z-index: 3; }
.rg-side { border-left: 1px solid #d0d0d0; width: 42px; padding: 7px 0 0 4px; align-items: center; }
.ric-box { width: 28px; height: 28px; border: 1px solid #d0d0d0; display: flex; align-items: center; justify-content: center; flex: none; }
.rlabel-side { margin-top: 17px; }

/* body */
.body { height: 590px; flex: none; display: flex; }

/* library */
.library { width: 69px; flex: none; display: flex; flex-direction: column; }
.lib-title { height: 26px; padding: 6px 0 0 18px; font-size: 12px; letter-spacing: .5px; }
.lib-search { height: 28px; flex: none; display: flex; align-items: flex-start; padding-left: 7px; }
.lib-search svg:first-child { margin-top: 4px; }
.lib-search svg:nth-child(2) { margin: 9px 0 0 7px; }
.lib-input { width: 40px; height: 23px; margin-left: 3px; border: 1px solid #ccc; flex: none; }
.cats { display: flex; flex-direction: column; gap: 3px; padding-left: 4px; flex: none; }
.cats li { height: 24px; width: 90px; display: flex; align-items: center; gap: 7px; padding-left: 2px; border: 1px solid #e4e4e4; white-space: nowrap; color: #222; }
.shapes { flex: 1; min-height: 0; padding-left: 14px; display: flex; flex-direction: column; align-items: center; }
.shapes svg { flex: none; }
.sh1 { margin-top: 8px; }
.sh-label { margin-top: 7px; height: 16px; white-space: nowrap; flex: none; }
.sh2 { margin-top: 12px; }
.sh3 { margin-top: 14px; }
.sh4 { margin-top: 13px; }
.lib-tab { height: 24px; flex: none; margin: 0 5px; border: 1px solid #ccc; border-bottom: 0; text-align: center; line-height: 22px; background: #fff; position: relative; }

/* work area */
.workarea { width: 928px; flex: none; display: flex; flex-direction: column; }
.pane-head { height: 25px; flex: none; }
.pane-collapse { display: flex; align-items: center; justify-content: flex-end; padding-right: 20px; width: 23px; height: 25px; margin-left: 287px; background: #c5d5ee; }
.editor { height: 512px; flex: none; display: flex; }
.canvas-col { width: 911px; flex: none; overflow: hidden; }
.ruler { height: 18px; padding-left: 281px; display: flex; overflow: hidden; border-top: 1px solid #d8d8d8; }
.ruler span {
  width: 56.700px; flex: none; padding-left: 2px;
  border-left: 1px solid #d0d0d0;
  font: 10px/14px "Liberation Sans", sans-serif; color: #667a96;
  background: repeating-linear-gradient(to right, transparent 0 10.340px, #ccc 10.340px 11.340px) left bottom / 100% 4px no-repeat;
}
.plan { display: block; }
.plan-text text { font: 5px "Liberation Sans", sans-serif; fill: #333; text-anchor: middle; }

.vscroll { width: 17px; flex: none; display: flex; flex-direction: column; }
.sb-btn { width: 17px; height: 17px; flex: none; display: flex; align-items: center; justify-content: center; background: #fff; border: 1px solid #bcbcbc; }
.sb-track { display: block; background: #eee; flex: none; }
.sb-thumb { display: block; background: #fff; border: 1px solid #bcbcbc; flex: none; }
.tri { width: 0; height: 0; border: 5px solid transparent; }
.tri-up { border-top: 0; border-bottom: 5px solid #777; }
.tri-down { border-bottom: 0; border-top: 5px solid #777; }
.tri-right { border-right: 0; border-left: 5px solid #777; }
.vt1 { height: 126px; } .vt2 { height: 226px; } .vt3 { flex: 1; }

.hscroll { height: 17px; flex: none; display: flex; }
.ht1 { width: 415px; } .ht2 { width: 261px; } .ht3 { flex: 1; } .ht4 { width: 17px; }
.pagebar { height: 22px; flex: none; padding-left: 324px; display: flex; align-items: center; }
.pagebar svg:nth-child(3) { margin: 0 9px 0 8px; }
.pg-sep { width: 1px; height: 11px; background: #aaa; }
.pagebar .pg-sep:nth-child(2) { margin-left: 6px; }
.pg-name { margin-left: 15px; font: bold 12px "Liberation Sans", sans-serif; letter-spacing: .8px; color: #4a6fc4; }
.palette { height: 14px; flex: none; display: flex; flex-direction: row-reverse; padding: 0 92px 1px 0; overflow: hidden; justify-content: flex-start; }
.sw { width: 7px; height: 13px; flex: none; }
.c1{background:#eeeeee}.c2{background:#e0e0e0}.c3{background:#d0d0d0}.c4{background:#b4b4b4}.c5{background:#a0a0a0}.c6{background:#8c8c8c}.c7{background:#707070}.c8{background:#5a5a5a}.c9{background:#444444}.c10{background:#000000}.c11{background:#c9d6cd}.c12{background:#d8cfc8}.c13{background:#e0b682}.c14{background:#b48a6c}.c15{background:#c27e40}.c16{background:#a85a2a}.c17{background:#944f28}.c18{background:#7a3e2a}.c19{background:#62301a}.c20{background:#eec4dc}.c21{background:#c8a4c8}.c22{background:#a998c8}.c23{background:#c87ca8}.c24{background:#a45a8c}.c25{background:#9c6098}.c26{background:#7c4c98}.c27{background:#6a4098}.c28{background:#7c3c8c}.c29{background:#7c3470}.c30{background:#fde3c5}.c31{background:#eaca98}.c32{background:#f4cf6a}.c33{background:#fbe87c}.c34{background:#ffe600}.c35{background:#ffd800}.c36{background:#fdc62e}.c37{background:#fcb838}.c38{background:#fbaa08}.c39{background:#f5a800}.c40{background:#f09a50}.c41{background:#f08000}.c42{background:#ec7410}.c43{background:#e4501e}.c44{background:#c8dcb8}.c45{background:#c4d83c}.c46{background:#a8c860}.c47{background:#84b810}.c48{background:#18ac54}.c49{background:#48bc78}.c50{background:#20c49c}.c51{background:#50bcc0}.c52{background:#0cb094}.c53{background:#1c9c44}.c54{background:#108048}.c55{background:#606c30}.c56{background:#00605c}.c57{background:#005c38}.c58{background:#004c38}.c59{background:#c8e4f0}.c60{background:#a0d4f0}.c61{background:#8cc4ec}.c62{background:#48c4f0}.c63{background:#08b4f0}.c64{background:#2ca0dc}.c65{background:#0c94dc}.c66{background:#0880c8}.c67{background:#5888c4}.c68{background:#3c5ca8}.c69{background:#086cb0}.c70{background:#0c4c90}.c71{background:#403080}.c72{background:#283878}.c73{background:#102858}.c74{background:#f9dbe0}.c75{background:#fdd4e4}.c76{background:#ecd4e8}.c77{background:#f0c0b8}.c78{background:#f0a898}

/* tools */
.tools { width: 38px; flex: none; padding: 26px 0 0 5px; }
.tool { height: 37px; width: 30px; border-top: 1px solid #ddd; display: flex; align-items: center; justify-content: center; }
.tool-last { border-bottom: 1px solid #ddd; height: 38px; }
.tool-fill { width: 20px; height: 20px; background: #7acfc8; border: 1px solid #5cc0b8; }
.tool-stack { position: relative; width: 20px; height: 20px; background: linear-gradient(#3e78b4, #3e78b4) 4px 0 / 16px 16px no-repeat, linear-gradient(#f0c878, #f0c878) 0 5px / 15px 15px no-repeat; }
.tool-help { width: 19px; height: 19px; border-radius: 50%; background: #3e78b4; color: #fff; text-align: center; font: bold 17px/19px "Liberation Sans", sans-serif; }

/* status bar */
.status { flex: 1; display: flex; align-items: center; background: #34589f; color: #fff; margin-right: -1px; }
.status-link { margin-left: 14px; width: 55px; color: #fff; text-decoration: underline; font: 12px "Liberation Sans", sans-serif; white-space: nowrap; }
.status-right { margin-left: 626px; display: flex; align-items: center; }
.g3 { margin-left: 3px; } .g6 { margin-left: 6px; } .g7 { margin-left: 7px; } .g8 { margin-left: 8px; } .g9 { margin-left: 9px; } .g10 { margin-left: 10px; } .g13 { margin-left: 13px; } .g16 { margin-left: 16px; }
.st-active { width: 20px; height: 18px; background: #a9bbdc; display: flex; align-items: center; justify-content: center; }
.st-minus { width: 9px; height: 1px; background: #fff; }
.slider { position: relative; display: block; width: 89px; height: 3px; background: #c9d2e6; }
.slider-thumb { position: absolute; left: 4px; top: -6px; width: 6px; height: 15px; background: #fff; }
.st-zoom { width: 24px; font: 12px "Liberation Sans", sans-serif; }
.st-grip { margin-top: 10px; }

/* page-size menu */
.sizemenu {
  position: absolute; left: 68px; top: 139px; width: 288px; height: 649px;
  display: flex; background: #fff; border: 2px solid #f00; z-index: 2;
  box-shadow: 3px 0 3px rgba(0,0,0,.28);
}
.sizelist { flex: 1; padding-top: 5px; }
.size {
  height: 38px; margin-bottom: 2px; padding-left: 39px; position: relative;
  display: flex; align-items: center;
  font: 11.400px "DejaVu Sans", sans-serif; color: #333; white-space: nowrap;
}
.sel { background: #a9bbdc; margin-right: 1px; }
.thumb { position: absolute; border: 1px solid #888; background: #fff; top: 50%; transform: translate(-50%, -50%); left: 23.500px; }
.a3 { width: 21px; height: 32px; }
.a4 { width: 17px; height: 24px; }
.a5 { width: 12px; height: 16px; }
.menu-scroll { width: 17px; flex: none; display: flex; flex-direction: column; }
.mt1 { height: 149px; } .mt2 { height: 369px; } .mt3 { flex: 1; }

.cursor { position: absolute; left: 98px; top: 126px; z-index: 4; }
```
